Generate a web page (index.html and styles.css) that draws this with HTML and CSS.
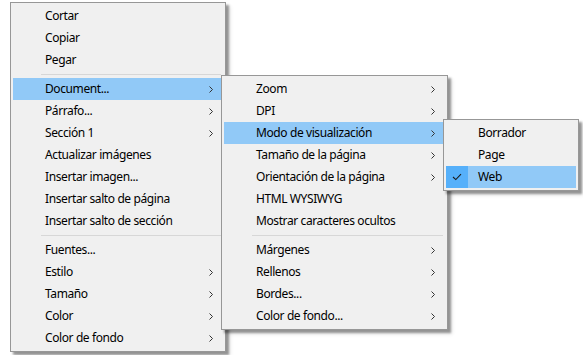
FILE: index.html
```html
<!DOCTYPE html>
<html lang="es">
<head>
<meta charset="utf-8">
<title>Menú contextual</title>
<link rel="stylesheet" href="styles.css">
</head>
<body>
<div class="stage">
  <ul class="menu menu-main">
    <li class="item"><span class="label">Cortar</span></li>
    <li class="item"><span class="label">Copiar</span></li>
    <li class="item"><span class="label">Pegar</span></li>
    <li class="sep"></li>
    <li class="item active sub"><span class="label">Document...</span><svg class="arrow" width="4" height="7" viewBox="0 0 4 7"><path d="M0.5 0.5 L3.5 3.5 L0.5 6.5" /></svg></li>
    <li class="item sub"><span class="label">Párrafo...</span><svg class="arrow" width="4" height="7" viewBox="0 0 4 7"><path d="M0.5 0.5 L3.5 3.5 L0.5 6.5" /></svg></li>
    <li class="item sub"><span class="label">Sección 1</span><svg class="arrow" width="4" height="7" viewBox="0 0 4 7"><path d="M0.5 0.5 L3.5 3.5 L0.5 6.5" /></svg></li>
    <li class="item"><span class="label">Actualizar imágenes</span></li>
    <li class="item"><span class="label">Insertar imagen...</span></li>
    <li class="item"><span class="label">Insertar salto de página</span></li>
    <li class="item"><span class="label">Insertar salto de sección</span></li>
    <li class="sep"></li>
    <li class="item"><span class="label">Fuentes...</span></li>
    <li class="item sub"><span class="label">Estilo</span><svg class="arrow" width="4" height="7" viewBox="0 0 4 7"><path d="M0.5 0.5 L3.5 3.5 L0.5 6.5" /></svg></li>
    <li class="item sub"><span class="label">Tamaño</span><svg class="arrow" width="4" height="7" viewBox="0 0 4 7"><path d="M0.5 0.5 L3.5 3.5 L0.5 6.5" /></svg></li>
    <li class="item sub"><span class="label">Color</span><svg class="arrow" width="4" height="7" viewBox="0 0 4 7"><path d="M0.5 0.5 L3.5 3.5 L0.5 6.5" /></svg></li>
    <li class="item sub"><span class="label">Color de fondo</span><svg class="arrow" width="4" height="7" viewBox="0 0 4 7"><path d="M0.5 0.5 L3.5 3.5 L0.5 6.5" /></svg></li>
  </ul>

  <ul class="menu menu-doc">
    <li class="item sub"><span class="label">Zoom</span><svg class="arrow" width="4" height="7" viewBox="0 0 4 7"><path d="M0.5 0.5 L3.5 3.5 L0.5 6.5" /></svg></li>
    <li class="item sub"><span class="label">DPI</span><svg class="arrow" width="4" height="7" viewBox="0 0 4 7"><path d="M0.5 0.5 L3.5 3.5 L0.5 6.5" /></svg></li>
    <li class="item active sub"><span class="label">Modo de visualización</span><svg class="arrow" width="4" height="7" viewBox="0 0 4 7"><path d="M0.5 0.5 L3.5 3.5 L0.5 6.5" /></svg></li>
    <li class="item sub"><span class="label">Tamaño de la página</span><svg class="arrow" width="4" height="7" viewBox="0 0 4 7"><path d="M0.5 0.5 L3.5 3.5 L0.5 6.5" /></svg></li>
    <li class="item sub"><span class="label">Orientación de la página</span><svg class="arrow" width="4" height="7" viewBox="0 0 4 7"><path d="M0.5 0.5 L3.5 3.5 L0.5 6.5" /></svg></li>
    <li class="item"><span class="label">HTML WYSIWYG</span></li>
    <li class="item"><span class="label">Mostrar caracteres ocultos</span></li>
    <li class="sep"></li>
    <li class="item sub"><span class="label">Márgenes</span><svg class="arrow" width="4" height="7" viewBox="0 0 4 7"><path d="M0.5 0.5 L3.5 3.5 L0.5 6.5" /></svg></li>
    <li class="item sub"><span class="label">Rellenos</span><svg class="arrow" width="4" height="7" viewBox="0 0 4 7"><path d="M0.5 0.5 L3.5 3.5 L0.5 6.5" /></svg></li>
    <li class="item sub"><span class="label">Bordes...</span><svg class="arrow" width="4" height="7" viewBox="0 0 4 7"><path d="M0.5 0.5 L3.5 3.5 L0.5 6.5" /></svg></li>
    <li class="item sub"><span class="label">Color de fondo...</span><svg class="arrow" width="4" height="7" viewBox="0 0 4 7"><path d="M0.5 0.5 L3.5 3.5 L0.5 6.5" /></svg></li>
  </ul>

  <ul class="menu menu-mode">
    <li class="item"><span class="label">Borrador</span></li>
    <li class="item"><span class="label">Page</span></li>
    <li class="item active checked"><span class="check"><svg width="10" height="8" viewBox="0 0 10 8"><path d="M1 4 L3.8 6.6 L9 1.2" /></svg></span><span class="label">Web</span></li>
  </ul>
</div>
</body>
</html>
```

FILE: styles.css
```css
* {
  box-sizing: border-box;
}

html, body {
  margin: 0;
  padding: 0;
  background: #ffffff;
}

body {
  font-family: "Noto Sans", "Open Sans", sans-serif;
  font-size: 12px;
  letter-spacing: -0.4px;
  color: #000000;
}

.stage {
  position: relative;
  width: 583px;
  height: 355px;
  overflow: hidden;
}

.menu {
  position: absolute;
  margin: 0;
  list-style: none;
  display: flex;
  flex-direction: column;
  background: #f0f0f0;
  border: 1px solid #979797;
  padding: 2px 4px 2px 2px;
  box-shadow: 3px 3px 2px rgba(0, 0, 0, 0.35), 4px 4px 4px rgba(0, 0, 0, 0.12);
}

.menu-main {
  left: 10px;
  top: 2px;
  width: 216px;
}

.menu-doc {
  left: 221px;
  top: 75px;
  width: 227px;
}

.menu-mode {
  left: 443px;
  top: 119px;
  width: 136px;
  padding-right: 2px;
}

.item {
  position: relative;
  display: flex;
  align-items: center;
  height: 22px;
  padding-left: 32px;
  padding-right: 8px;
  white-space: nowrap;
}

.item .label {
  flex: 1;
  line-height: 22px;
}

.item.active {
  background: #91c9f7;
}

.arrow {
  flex: none;
  fill: none;
  stroke: #333333;
  stroke-width: 1;
}

.sep {
  height: 7px;
  display: flex;
  align-items: center;
  padding-left: 28px;
}

.sep::after {
  content: "";
  flex: 1;
  height: 1px;
  background: #d7d7d7;
}

.check {
  position: absolute;
  left: 0;
  top: 0;
  width: 22px;
  height: 22px;
  background: #56b0fa;
  display: flex;
  align-items: center;
  justify-content: center;
}

.check svg {
  fill: none;
  stroke: #1a1a1a;
  stroke-width: 1.1;
}
```
